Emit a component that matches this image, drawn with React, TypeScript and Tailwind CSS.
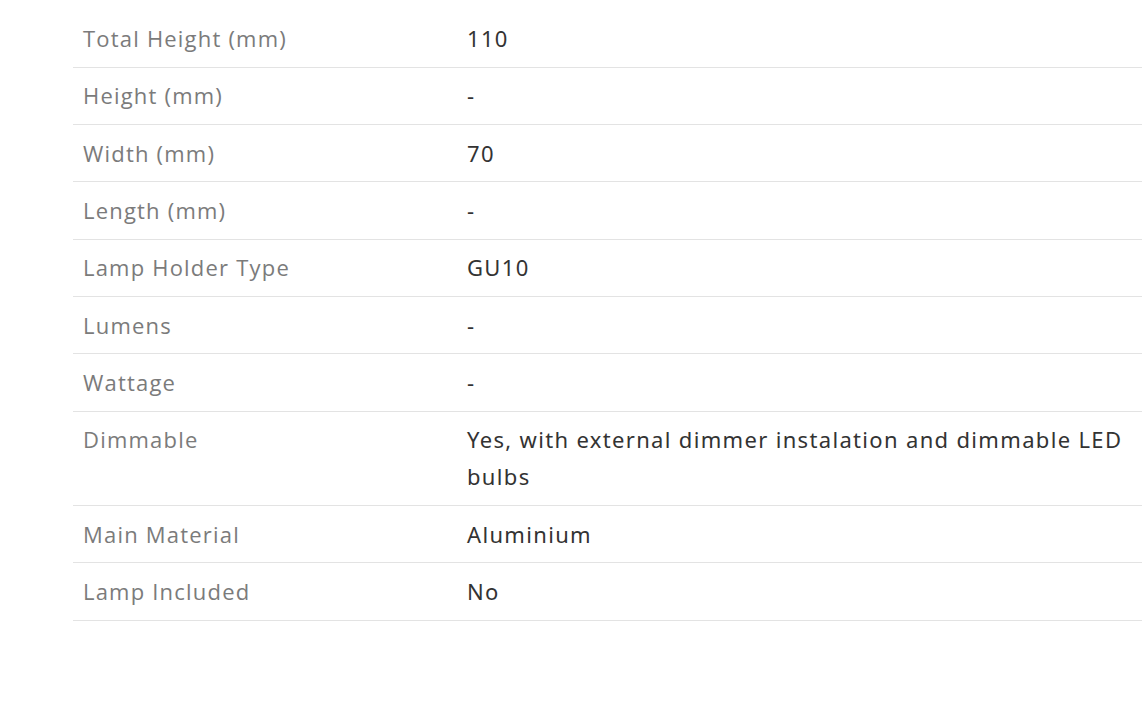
const rows: [string, string][] = [
  ["Total Height (mm)", "110"],
  ["Height (mm)", "-"],
  ["Width (mm)", "70"],
  ["Length (mm)", "-"],
  ["Lamp Holder Type", "GU10"],
  ["Lumens", "-"],
  ["Wattage", "-"],
  ["Dimmable", "Yes, with external dimmer instalation and dimmable LED bulbs"],
  ["Main Material", "Aluminium"],
  ["Lamp Included", "No"],
]

export default function App() {
  return (
    <div className="min-h-[701px] bg-white pt-[10.5px] pl-[73px]">
      <table className="w-[1069px] border-collapse text-[22px] leading-[37px]">
        <tbody>
          {rows.map(([label, value]) => (
            <tr key={label} className="border-b border-[#e3e3e3]">
              <td className="w-[384px] px-[10px] py-[9.67px] align-top font-['Open_Sans',sans-serif] tracking-[1.2px] text-[#7b7b7b]">
                {label}
              </td>
              <td className="px-[10px] py-[9.67px] align-top font-['Noto_Sans',sans-serif] tracking-[1.33px] text-[#333333]">
                {value}
              </td>
            </tr>
          ))}
        </tbody>
      </table>
    </div>
  )
}
